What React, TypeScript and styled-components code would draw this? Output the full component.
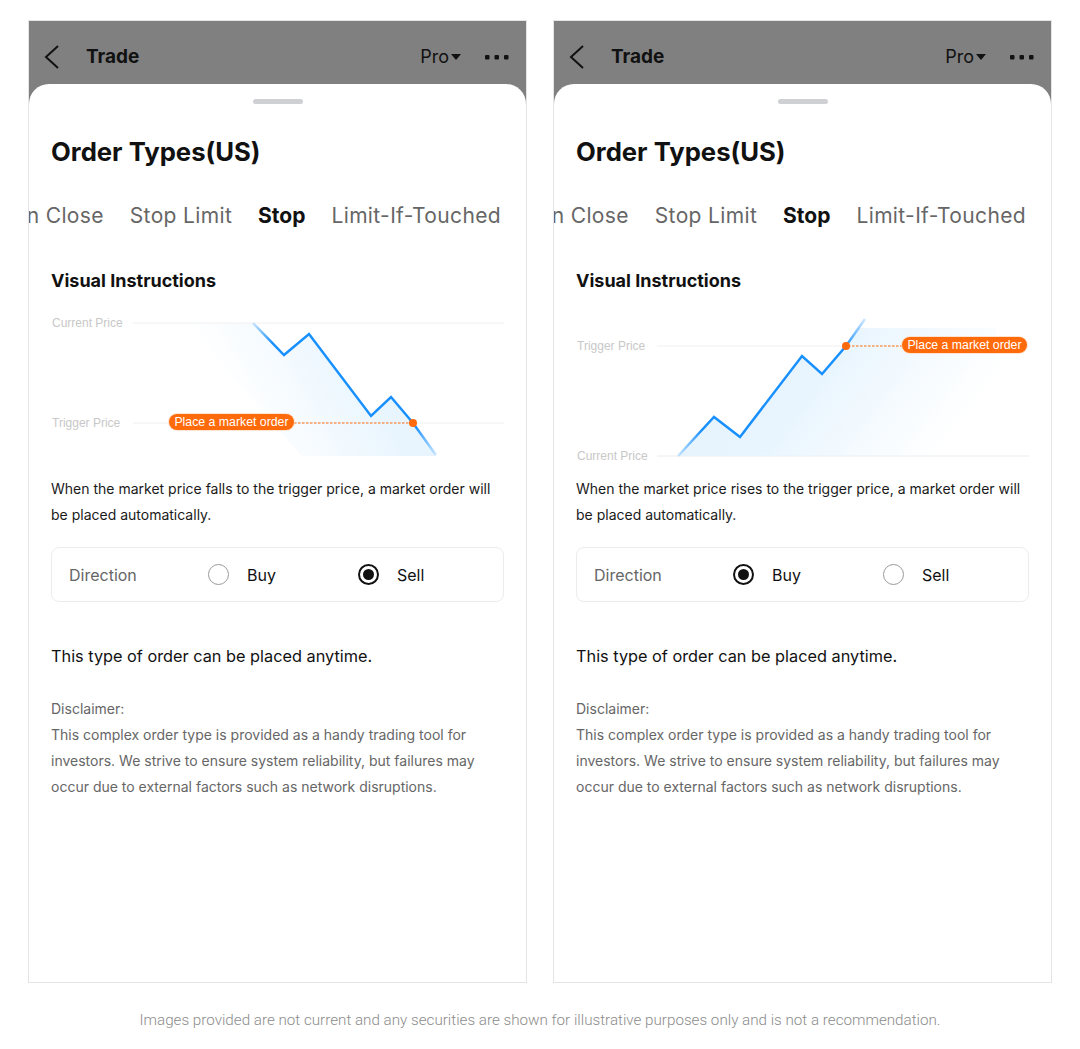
import React from "react";
import styled, {createGlobalStyle} from "styled-components";

const GlobalStyle = createGlobalStyle`
  body {
    margin: 0;
    background: #ffffff;
    font-family: Inter, "Noto Sans", "Liberation Sans", sans-serif;
  }
`;

const Page = styled.div`
  width: 1080px;
  padding-top: 20px;
  display: flex;
  flex-direction: column;
  align-items: center;
`;

const Frames = styled.div`
  display: flex;
  gap: 26px;
`;

const Phone = styled.div`
  width: 499px;
  height: 963px;
  box-sizing: border-box;
  border: 1px solid #e4e4e4;
  background: #808080;
  display: flex;
  flex-direction: column;
  overflow: hidden;
`;

const TopBar = styled.div`
  height: 63px;
  box-sizing: border-box;
  padding: 8px 17px 0 15px;
  display: flex;
  align-items: center;
  color: #111;
`;

const BarTitle = styled.div`
  font-size: 19px;
  font-weight: 700;
  margin-left: 26px;
  flex: 1;
`;

const ProSwitch = styled.div`
  display: flex;
  align-items: center;
  font-size: 18px;
  gap: 2px;
  margin-right: 24px;
`;

const Sheet = styled.div`
  flex: 1;
  background: #ffffff;
  border-radius: 20px 20px 0 0;
  padding: 15px 22px 0;
  display: flex;
  flex-direction: column;
`;

const Handle = styled.div`
  align-self: center;
  width: 50px;
  height: 5px;
  border-radius: 3px;
  background: #cfd0d4;
`;

const Title = styled.h1`
  margin: 31px 0 0;
  font-size: 25.7px;
  line-height: 34px;
  font-weight: 700;
  color: #111;
`;

const Tabs = styled.div`
  margin: 32px -22px 0;
  padding-right: 25px;
  display: flex;
  justify-content: flex-end;
  gap: 26px;
  overflow: hidden;
  white-space: nowrap;
`;

const Tab = styled.div<{ $active?: boolean }>`
  position: relative;
  flex-shrink: 0;
  font-size: 21px;
  line-height: 30px;
  letter-spacing: ${(p) => (p.$active ? "0" : "0.35px")};
  color: ${(p) => (p.$active ? "#111" : "#666")};
  font-weight: ${(p) => (p.$active ? 700 : 400)};

  &::after {
    content: "";
    display: ${(p) => (p.$active ? "block" : "none")};
    position: absolute;
    left: 50%;
    bottom: -5px;
    width: 20px;
    height: 3px;
    margin-left: -10px;
    border-radius: 2px;
    background: #111;
  }
`;

const Section = styled.h2`
  margin: 37px 0 0;
  font-size: 18px;
  line-height: 26px;
  font-weight: 700;
  color: #111;
`;

const Chart = styled.svg`
  display: block;
  margin-top: 16px;
  font-family: "Liberation Sans", Arial, sans-serif;
`;

const Text = styled.p`
  margin: 14px 0 0;
  font-size: 14px;
  line-height: 26px;
  color: #1a1a1a;
`;

const DirectionBox = styled.div`
  margin-top: 19px;
  height: 55px;
  box-sizing: border-box;
  border: 1px solid #ececec;
  border-radius: 8px;
  display: grid;
  grid-template-columns: 139px 150px 1fr;
  align-items: center;
  padding-left: 17px;
  font-size: 16px;
`;

const DirLabel = styled.div`
  color: #666;
`;

const Option = styled.div`
  display: flex;
  align-items: center;
  gap: 18px;
  color: #111;
`;

const Radio = styled.span<{ $checked?: boolean }>`
  width: 21px;
  height: 21px;
  box-sizing: border-box;
  border-radius: 50%;
  border: ${(p) => (p.$checked ? "2px solid #111" : "1.5px solid #9a9a9a")};
  display: flex;
  align-items: center;
  justify-content: center;

  &::after {
    content: "";
    display: ${(p) => (p.$checked ? "block" : "none")};
    width: 11px;
    height: 11px;
    border-radius: 50%;
    background: #111;
  }
`;

const Anytime = styled.p`
  margin: 42px 0 0;
  font-size: 16.3px;
  line-height: 24px;
  color: #111;
`;

const Disclaimer = styled.p`
  margin: 28px 0 0;
  font-size: 14px;
  line-height: 26px;
  color: #666;
`;

const Footer = styled.div`
  margin-top: 27px;
  font-family: Roboto, "Liberation Sans", sans-serif;
  font-weight: 300;
  font-size: 15.2px;
  line-height: 20px;
  color: #8c8c8c;
`;

function BackIcon() {
  return (
    <svg width="16" height="24" viewBox="0 0 16 24">
      <polyline points="14,1 2,12 14,23" fill="none" stroke="#111" strokeWidth="2" />
    </svg>
  );
}

function MoreIcon() {
  return (
    <svg width="24" height="6" viewBox="0 0 24 6">
      <rect x="0" y="1" width="4.5" height="4.5" rx="1" fill="#111" />
      <rect x="9.5" y="1" width="4.5" height="4.5" rx="1" fill="#111" />
      <rect x="19" y="1" width="4.5" height="4.5" rx="1" fill="#111" />
    </svg>
  );
}

function Pill({x, y}: { x: number; y: number }) {
  return (
    <g>
      <rect x={x - 1} y={y - 1} width={127} height={18} rx={9} fill="#ffd9bf" opacity="0.7" />
      <rect x={x} y={y} width={125} height={16} rx={8} fill="#ff6a0a" />
      <text x={x + 62.5} y={y + 12.2} textAnchor="middle" fontSize="12.3" fill="#ffffff">
        Place a market order
      </text>
    </g>
  );
}

function SellChart() {
  return (
    <Chart width="454" height="152" viewBox="0 0 454 152">
      <defs>
        <linearGradient id="sellFill" x1="0" y1="0" x2="1" y2="-0.3">
          <stop offset="0" stopColor="#e8f5fe" stopOpacity="0" />
          <stop offset="0.55" stopColor="#e6f4fe" stopOpacity="0.9" />
          <stop offset="1" stopColor="#e3f2fe" stopOpacity="1" />
        </linearGradient>
        <linearGradient id="sellLine" x1="202" y1="13" x2="385" y2="145" gradientUnits="userSpaceOnUse">
          <stop offset="0" stopColor="#1890ff" stopOpacity="0.2" />
          <stop offset="0.12" stopColor="#1890ff" stopOpacity="1" />
          <stop offset="0.85" stopColor="#1890ff" stopOpacity="1" />
          <stop offset="1" stopColor="#1890ff" stopOpacity="0.2" />
        </linearGradient>
      </defs>
      <line x1="82" y1="13" x2="453" y2="13" stroke="#f0f0f0" strokeWidth="1" />
      <line x1="82" y1="113" x2="453" y2="113" stroke="#f0f0f0" strokeWidth="1" />
      <text x="1" y="17" fontSize="12" fill="#c8c8c8">Current Price</text>
      <text x="1" y="117" fontSize="12" fill="#c8c8c8">Trigger Price</text>
      <polygon
        points="136,13 202,13 233,45 258,24 320,106 340,87 362,113 385,146 250,146"
        fill="url(#sellFill)"
      />
      <polyline
        points="202,13 233,45 258,24 320,106 340,87 362,113 385,145"
        fill="none"
        stroke="url(#sellLine)"
        strokeWidth="2.5"
        strokeLinejoin="miter"
      />
      <line x1="243" y1="113" x2="360" y2="113" stroke="#ff6a0a" strokeWidth="1" strokeDasharray="2.5 1.5" />
      <circle cx="362" cy="113" r="4" fill="#ff6a0a" />
      <Pill x={118} y={104} />
    </Chart>
  );
}

function BuyChart() {
  return (
    <Chart width="454" height="152" viewBox="0 0 454 152">
      <defs>
        <linearGradient id="buyFill" x1="0" y1="0" x2="1" y2="0.3">
          <stop offset="0" stopColor="#e3f2fe" stopOpacity="1" />
          <stop offset="0.5" stopColor="#e6f4fe" stopOpacity="0.9" />
          <stop offset="1" stopColor="#e8f5fe" stopOpacity="0" />
        </linearGradient>
        <linearGradient id="buyLine" x1="102" y1="146" x2="289" y2="9" gradientUnits="userSpaceOnUse">
          <stop offset="0" stopColor="#1890ff" stopOpacity="0.2" />
          <stop offset="0.15" stopColor="#1890ff" stopOpacity="1" />
          <stop offset="0.85" stopColor="#1890ff" stopOpacity="1" />
          <stop offset="1" stopColor="#1890ff" stopOpacity="0.2" />
        </linearGradient>
      </defs>
      <line x1="81" y1="36" x2="453" y2="36" stroke="#f0f0f0" strokeWidth="1" />
      <line x1="81" y1="146" x2="453" y2="146" stroke="#ececec" strokeWidth="1" />
      <text x="1" y="40" fontSize="12" fill="#c8c8c8">Trigger Price</text>
      <text x="1" y="150" fontSize="12" fill="#c8c8c8">Current Price</text>
      <polygon
        points="102,146 138,107 164,127 226,46 246,64 270,36 283,18 420,18 430,146"
        fill="url(#buyFill)"
      />
      <polyline
        points="102,146 138,107 164,127 226,46 246,64 270,36 289,9"
        fill="none"
        stroke="url(#buyLine)"
        strokeWidth="2.5"
        strokeLinejoin="miter"
      />
      <line x1="272" y1="36" x2="326" y2="36" stroke="#ff6a0a" strokeWidth="1" strokeDasharray="2.5 1.5" />
      <circle cx="270" cy="36" r="4" fill="#ff6a0a" />
      <Pill x={326} y={27} />
    </Chart>
  );
}

function PhoneScreen({direction}: { direction: "buy" | "sell" }) {
  const sell = direction === "sell";
  return (
    <Phone>
      <TopBar>
        <BackIcon />
        <BarTitle>Trade</BarTitle>
        <ProSwitch>
          Pro
          <svg width="10" height="6" viewBox="0 0 10 6">
            <polygon points="0,0 10,0 5,6" fill="#111" />
          </svg>
        </ProSwitch>
        <MoreIcon />
      </TopBar>
      <Sheet>
        <Handle />
        <Title>Order Types(US)</Title>
        <Tabs>
          <Tab>Market On Close</Tab>
          <Tab>Stop Limit</Tab>
          <Tab $active>Stop</Tab>
          <Tab>Limit-If-Touched</Tab>
        </Tabs>
        <Section>Visual Instructions</Section>
        {sell ? <SellChart /> : <BuyChart />}
        <Text>
          When the market price {sell ? "falls" : "rises"} to the trigger price, a market order will be
          placed automatically.
        </Text>
        <DirectionBox>
          <DirLabel>Direction</DirLabel>
          <Option>
            <Radio $checked={!sell} />
            Buy
          </Option>
          <Option>
            <Radio $checked={sell} />
            Sell
          </Option>
        </DirectionBox>
        <Anytime>This type of order can be placed anytime.</Anytime>
        <Disclaimer>
          Disclaimer:
          <br />
          This complex order type is provided as a handy trading tool for investors. We strive to
          ensure system reliability, but failures may occur due to external factors such as network
          disruptions.
        </Disclaimer>
      </Sheet>
    </Phone>
  );
}

export default function App() {
  return (
    <Page>
      <GlobalStyle />
      <Frames>
        <PhoneScreen direction="sell" />
        <PhoneScreen direction="buy" />
      </Frames>
      <Footer>
        Images provided are not current and any securities are shown for illustrative purposes only
        and is not a recommendation.
      </Footer>
    </Page>
  );
}
